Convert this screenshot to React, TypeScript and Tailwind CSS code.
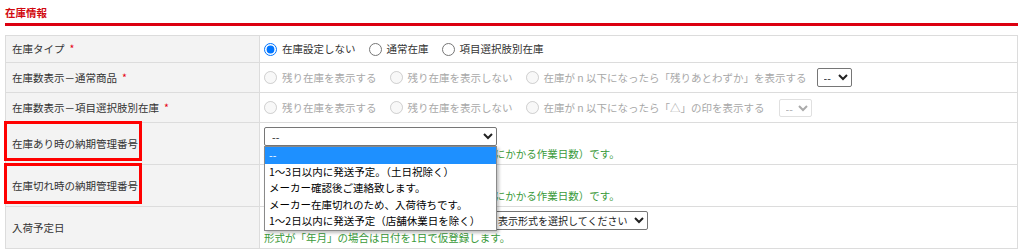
import React from "react";

const Req = () => <span className="text-[#e60012] ml-[5px]">*</span>;

function Radio({ label, checked, disabled, name }: { label: string; checked?: boolean; disabled?: boolean; name: string }) {
  return (
    <label className={`inline-flex items-center mr-[13px] ${disabled ? "text-[#a8a8a8]" : "text-[#333]"}`}>
      <input
        type="radio"
        name={name}
        defaultChecked={checked}
        disabled={disabled}
        className="m-0 mr-[5px] w-[13px] h-[13px]"
      />
      <span>{label}</span>
    </label>
  );
}

function LabelCell({ children, h, boxed }: { children: React.ReactNode; h: string; boxed?: string }) {
  return (
    <div className={`relative ${h} bg-[#f3f3f3] border-r border-b border-[#dcdcdc] flex items-center pl-[6px] text-[#333]`}>
      {children}
      {boxed && <div className={`absolute left-[-2px] top-[-2px] w-[138px] ${boxed} border-[3px] border-[#ff0000]`} />}
    </div>
  );
}

export default function App() {
  const opts = [
    "--",
    "1～3日以内に発送予定。（土日祝除く）",
    "メーカー確認後ご連絡致します。",
    "メーカー在庫切れのため、入荷待ちです。",
    "1～2日以内に発送予定（店舗休業日を除く）",
  ];
  return (
    <div className="w-[1024px] h-[252px] overflow-hidden bg-white pl-[5px] pr-[6px] text-[10.5px] leading-[16px] font-['Noto_Sans_CJK_JP','Noto_Sans',sans-serif]">
      <div className="h-[23px] pt-[5px] text-[#d20a10] font-bold text-[10.5px] leading-[15px]">在庫情報</div>
      <div className="h-[3px] bg-[#dc0010]" />
      <div className="h-[9px]" />
      <div className="grid grid-cols-[254px_1fr] border-t border-l border-r border-[#dcdcdc]">
        {/* row 1 */}
        <LabelCell h="h-[27px]">在庫タイプ<Req /></LabelCell>
        <div className="h-[27px] border-b border-[#dcdcdc] flex items-center pl-[4px]">
          <Radio name="t" label="在庫設定しない" checked />
          <Radio name="t" label="通常在庫" />
          <Radio name="t" label="項目選択肢別在庫" />
        </div>
        {/* row 2 */}
        <LabelCell h="h-[30px]">在庫数表示－通常商品<Req /></LabelCell>
        <div className="h-[30px] border-b border-[#dcdcdc] flex items-center pl-[4px]">
          <Radio name="a" label="残り在庫を表示する" disabled />
          <Radio name="a" label="残り在庫を表示しない" disabled />
          <Radio name="a" label="在庫が n 以下になったら「残りあとわずか」を表示する" disabled />
          <select className="w-[35px] h-[19px] border border-[#767676] rounded-[2px] text-[#222] text-[10.5px] ml-[-3px] pl-[2px]">
            <option>--</option>
          </select>
        </div>
        {/* row 3 */}
        <LabelCell h="h-[30px]">在庫数表示－項目選択肢別在庫<Req /></LabelCell>
        <div className="h-[30px] border-b border-[#dcdcdc] flex items-center pl-[4px]">
          <Radio name="b" label="残り在庫を表示する" disabled />
          <Radio name="b" label="残り在庫を表示しない" disabled />
          <Radio name="b" label="在庫が n 以下になったら「△」の印を表示する" disabled />
          <select disabled className="w-[33px] h-[18px] border border-[#e0e0e0] rounded-[2px] text-[#aaa] text-[10.5px] ml-[1px] pl-[2px]">
            <option>--</option>
          </select>
        </div>
        {/* row 4 */}
        <LabelCell h="h-[42px]" boxed="h-[40px]">在庫あり時の納期管理番号</LabelCell>
        <div className="relative h-[42px] border-b border-[#dcdcdc] pl-[4px] pt-[4px]">
          <select className="block w-[233px] h-[19px] border border-[#767676] rounded-[2px] text-[#222] text-[10.5px] pl-[3px]">
            <option>--</option>
          </select>
          <div className="text-[#3a9a3a] whitespace-nowrap">納期の目安となる日数（ご注文から商品発送までにかかる作業日数）です。</div>
          <div className="absolute z-10 left-[4px] top-[23px] w-[233px] bg-white border border-[#8a8a8a] shadow-[2px_2px_3px_rgba(0,0,0,0.25)] text-black">
            {opts.map((o, i) => (
              <div key={i} className={`h-[16.5px] leading-[16.5px] pl-[4px] whitespace-nowrap ${i === 0 ? "bg-[#1e90ff] text-white" : ""}`}>{o}</div>
            ))}
          </div>
        </div>
        {/* row 5 */}
        <LabelCell h="h-[42px]" boxed="h-[41px]">在庫切れ時の納期管理番号</LabelCell>
        <div className="h-[42px] border-b border-[#dcdcdc] pl-[4px] pt-[4px]">
          <select className="block w-[233px] h-[19px] border border-[#767676] rounded-[2px] text-[#222] text-[10.5px] pl-[3px]">
            <option>--</option>
          </select>
          <div className="text-[#3a9a3a] whitespace-nowrap">納期の目安となる日数（ご注文から商品発送までにかかる作業日数）です。</div>
        </div>
        {/* row 6 */}
        <LabelCell h="h-[42px]">入荷予定日</LabelCell>
        <div className="h-[42px] border-b border-[#dcdcdc] pl-[4px] pt-[4px]">
          <div className="flex items-center gap-[4px]">
            <input type="text" className="w-[225px] h-[19px] border border-[#767676] rounded-[2px]" />
            <select className="w-[155px] h-[19px] border border-[#767676] rounded-[2px] text-[#222] text-[10px] pl-0">
              <option>表示形式を選択してください</option>
            </select>
          </div>
          <div className="text-[#3a9a3a] whitespace-nowrap">形式が「年月」の場合は日付を1日で仮登録します。</div>
        </div>
      </div>
    </div>
  );
}
